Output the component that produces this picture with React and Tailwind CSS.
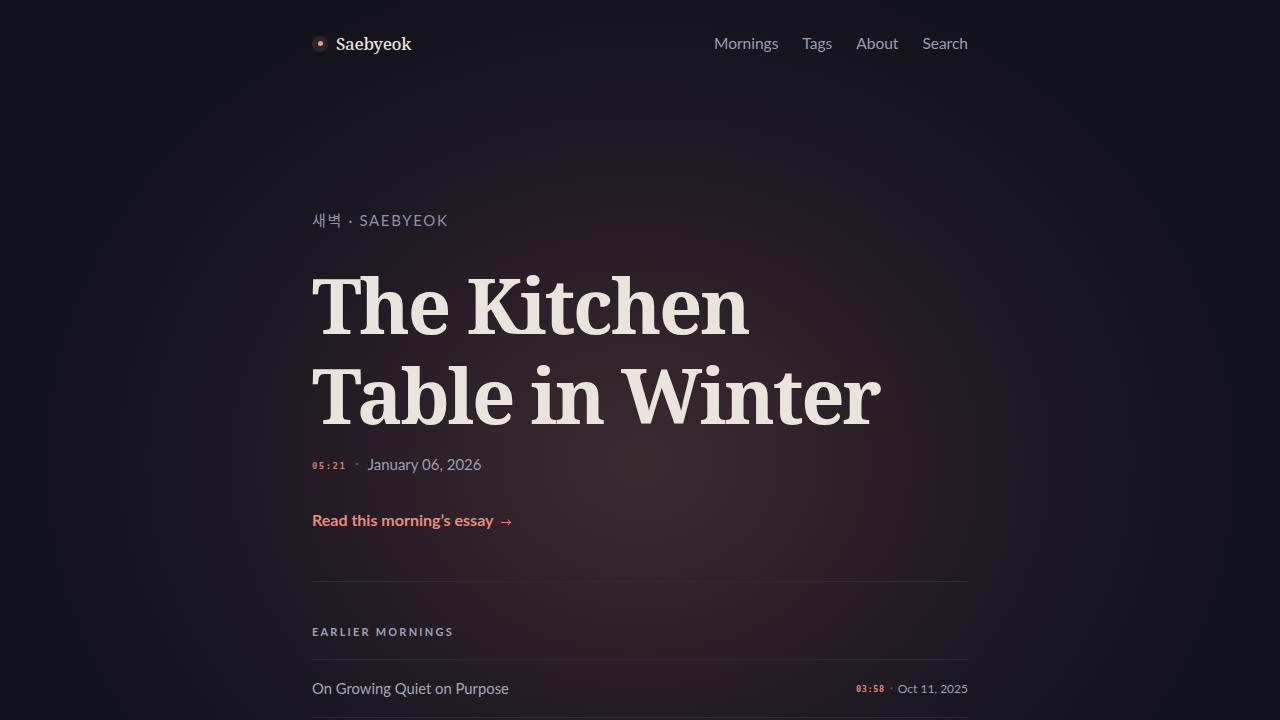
const nav = ['Mornings', 'Tags', 'About', 'Search']

const earlier = [{ title: 'On Growing Quiet on Purpose', time: '03:58', date: 'Oct 11, 2025' }]

function Stamp({ children, className = '' }) {
  return (
    <span className={`font-['DejaVu_Sans_Mono',monospace] font-bold text-[#e3857a] ${className}`}>
      {children}
    </span>
  )
}

export default function App() {
  return (
    <div className="min-h-screen bg-[#13131c] bg-[radial-gradient(ellipse_620px_520px_at_50%_64%,#3c2a31_0%,#2a1f28_38%,#1a1720_68%,#13131c_100%)] font-['Lato',sans-serif] text-[#9c9db2]">
      <div className="w-[656px] mx-auto">
        <header className="h-[87px] flex items-center justify-between">
          <a className="flex items-center gap-2">
            <span className="w-4 h-4 rounded-full bg-[#2f2329] flex items-center justify-center">
              <span className="w-[5px] h-[5px] rounded-full bg-[#ee9a8e]" />
            </span>
            <span className="font-['Noto_Serif',serif] font-medium text-[17px] tracking-[-0.02em] text-[#ebe5dd]">Saebyeok</span>
          </a>
          <nav className="flex items-center gap-[24px] text-[15.5px] text-[#9a9cb4]">
            {nav.map((n) => (
              <a key={n}>{n}</a>
            ))}
          </nav>
        </header>

        <section>
          <p className="mt-[123px] text-[15px] leading-5 tracking-[0.11em] text-[#8f90a9] font-['Lato','Noto_Sans_CJK_KR',sans-serif]">
            새벽 · SAEBYEOK
          </p>
          <h1 className="mt-[30px] font-['Noto_Serif',serif] font-bold text-[76px] leading-[90px] tracking-[-0.03em] text-[#e9e4dc]">
            The Kitchen
            <br />
            Table in Winter
          </h1>
          <div className="mt-3 flex items-center h-6">
            <Stamp className="text-[9px] tracking-[0.16em] mt-[5px] opacity-90">05:21</Stamp>
            <span className="mx-[9px] text-[#6b6878] text-[13px]">·</span>
            <span className="text-[15px]">January 06, 2026</span>
          </div>
          <a className="mt-8 flex items-center h-6 text-[16px] font-bold text-[#e8897c]">
            Read this morning’s essay
            <span className="ml-[7px] mt-[5px] text-[11px] font-normal">→</span>
          </a>
        </section>

        <div className="mt-[49px] border-t border-[#2e2b35]" />

        <section className="pt-[42px]">
          <h2 className="text-[11px] leading-4 font-bold tracking-[0.2em] text-[#a0a0b4]">EARLIER MORNINGS</h2>
          <ul className="mt-[19px] border-t border-[#2e2b35]">
            {earlier.map((e) => (
              <li key={e.title} className="h-[58px] flex items-center justify-between border-b border-[#2e2b35]">
                <span className="text-[14.8px] text-[#a5a6b8]">{e.title}</span>
                <span className="flex items-center">
                  <Stamp className="text-[8.5px] tracking-[0.08em] mt-[2px]">{e.time}</Stamp>
                  <span className="mx-[5px] text-[#6b6878] text-[11px]">·</span>
                  <span className="text-[12px]">{e.date}</span>
                </span>
              </li>
            ))}
          </ul>
        </section>
      </div>
    </div>
  )
}
